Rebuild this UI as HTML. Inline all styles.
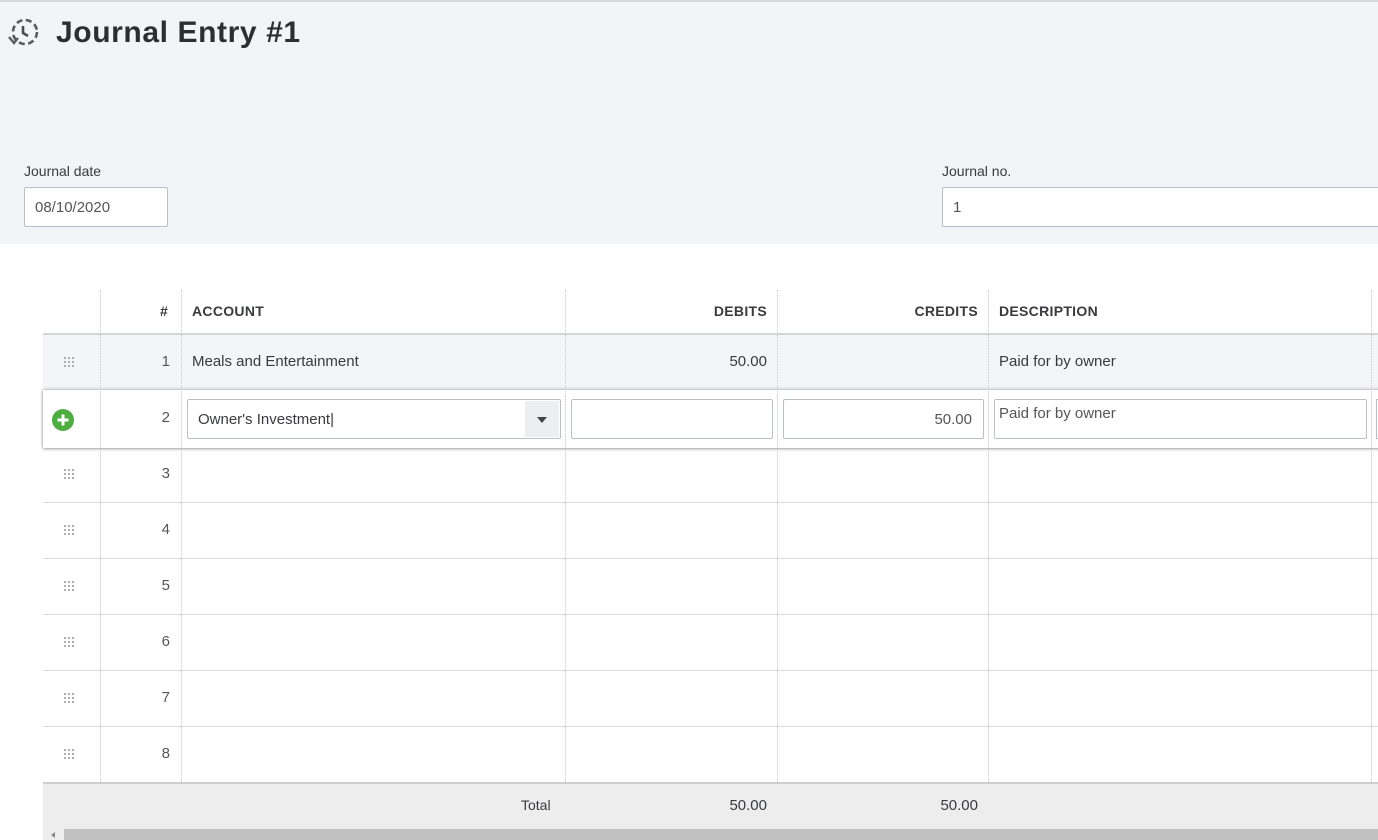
<!DOCTYPE html><html><head><style>
*{margin:0;padding:0;box-sizing:border-box}
body{width:1378px;height:840px;overflow:hidden;background:#fff;font-family:"Liberation Sans",sans-serif;color:#393a3d;position:relative}
.a{position:absolute}
.top{left:0;top:0;width:1378px;height:244px;background:#f3f4f8;border-top:2px solid #d8d9dc}
h1{position:absolute;left:56px;top:16px;font-size:30px;letter-spacing:0.6px;font-weight:bold;color:#2d2e31}
.lbl{font-size:14px;color:#393a3d}
.inp{background:#fff;border:1px solid #babec5;border-radius:2px;font-size:15px;color:#555;padding-left:10px;line-height:39px}
.vl{top:290px;height:494px;border-left:1px dotted #c9c9c9;width:0}
.hl{left:43px;width:1335px;height:1px;background:#dcdcdc}
.th{top:303px;font-size:14px;font-weight:bold;color:#393a3d;letter-spacing:0.3px}
.td{font-size:15px;color:#393a3d}
.num{width:60px;text-align:right;left:110px;font-size:15px;color:#555}
.grip{left:63px;width:12px;height:12px;background-image:radial-gradient(circle,#aaa 1px,transparent 1.3px);background-size:4px 4px}
</style></head><body>
<div class="a top"></div>
<svg class="a" style="left:7px;top:17px" width="34" height="32" viewBox="0 0 34 32"><circle cx="18" cy="15" r="12" fill="none" stroke="#5b5c60" stroke-width="2.6" stroke-dasharray="6 3.5"/><path d="M16 9v7l5 3" fill="none" stroke="#4b4c50" stroke-width="2.6"/><path d="M2 20l5 6 4-5" fill="none" stroke="#5b5c60" stroke-width="2.4"/></svg>
<h1>Journal Entry #1</h1>
<div class="a lbl" style="left:24px;top:163px">Journal date</div>
<div class="a inp" style="left:24px;top:187px;width:144px;height:40px">08/10/2020</div>
<div class="a lbl" style="left:942px;top:163px">Journal no.</div>
<div class="a inp" style="left:942px;top:187px;width:440px;height:40px">1</div>

<div class="a" style="left:43px;top:334px;width:1335px;height:54px;background:#f4f5f8"></div>
<div class="a hl" style="top:333px;height:2px;background:#d4d5d8"></div>
<div class="a" style="left:43px;top:390px;width:1340px;height:58px;background:#fff;box-shadow:0 1px 3px rgba(0,0,0,.35),0 -1px 3px rgba(0,0,0,.25)"></div>
<div class="a hl" style="top:502px"></div><div class="a hl" style="top:558px"></div><div class="a hl" style="top:614px"></div><div class="a hl" style="top:670px"></div><div class="a hl" style="top:726px"></div>
<div class="a hl" style="top:782px;height:2px;background:#cfcfcf"></div>
<div class="a vl" style="left:100px"></div><div class="a vl" style="left:181px"></div><div class="a vl" style="left:565px"></div><div class="a vl" style="left:777px"></div><div class="a vl" style="left:988px"></div><div class="a vl" style="left:1371px"></div>

<div class="a th" style="left:160px">#</div>
<div class="a th" style="left:192px">ACCOUNT</div>
<div class="a th" style="left:600px;width:167px;text-align:right">DEBITS</div>
<div class="a th" style="left:800px;width:178px;text-align:right">CREDITS</div>
<div class="a th" style="left:999px">DESCRIPTION</div>

<div class="a grip" style="top:356px"></div>
<div class="a num" style="top:353px">1</div>
<div class="a td" style="left:192px;top:353px">Meals and Entertainment</div>
<div class="a td" style="left:600px;width:167px;text-align:right;top:353px">50.00</div>
<div class="a td" style="left:999px;top:353px">Paid for by owner</div>

<svg class="a" style="left:51px;top:408px" width="24" height="24"><circle cx="12" cy="12" r="11" fill="#2ca01c" opacity=".85"/><path d="M12 6.5v11M6.5 12h11" stroke="#fff" stroke-width="3"/></svg>
<div class="a num" style="top:409px">2</div>
<div class="a inp" style="left:187px;top:399px;width:374px;height:40px;color:#393a3d">Owner's Investment|</div>
<div class="a" style="left:525px;top:401px;width:34px;height:36px;background:#eceef1"></div>
<div class="a" style="left:537px;top:417px;border:5px solid transparent;border-top:6px solid #444;border-bottom:0"></div>
<div class="a inp" style="left:571px;top:399px;width:202px;height:40px"></div>
<div class="a inp" style="left:783px;top:399px;width:201px;height:40px;text-align:right;padding-right:11px">50.00</div>
<div class="a inp" style="left:994px;top:399px;width:373px;height:40px;line-height:28px;padding-left:4px">Paid for by owner</div>
<div class="a" style="left:1376px;top:399px;width:4px;height:40px;border:1px solid #babec5"></div>

<div class="a grip" style="top:468px"></div><div class="a num" style="top:465px">3</div>
<div class="a grip" style="top:524px"></div><div class="a num" style="top:521px">4</div>
<div class="a grip" style="top:580px"></div><div class="a num" style="top:577px">5</div>
<div class="a grip" style="top:636px"></div><div class="a num" style="top:633px">6</div>
<div class="a grip" style="top:692px"></div><div class="a num" style="top:689px">7</div>
<div class="a grip" style="top:748px"></div><div class="a num" style="top:745px">8</div>

<div class="a" style="left:43px;top:784px;width:1335px;height:56px;background:#ededed"></div>
<div class="a td" style="left:521px;top:797px;font-size:14px">Total</div>
<div class="a td" style="left:600px;width:167px;text-align:right;top:797px">50.00</div>
<div class="a td" style="left:800px;width:178px;text-align:right;top:797px">50.00</div>
<div class="a" style="left:64px;top:829px;width:1314px;height:11px;background:#c1c1c1"></div>
<div class="a" style="left:51px;top:832px;border:3px solid transparent;border-right:4px solid #888;border-left:0"></div>
</body></html>
